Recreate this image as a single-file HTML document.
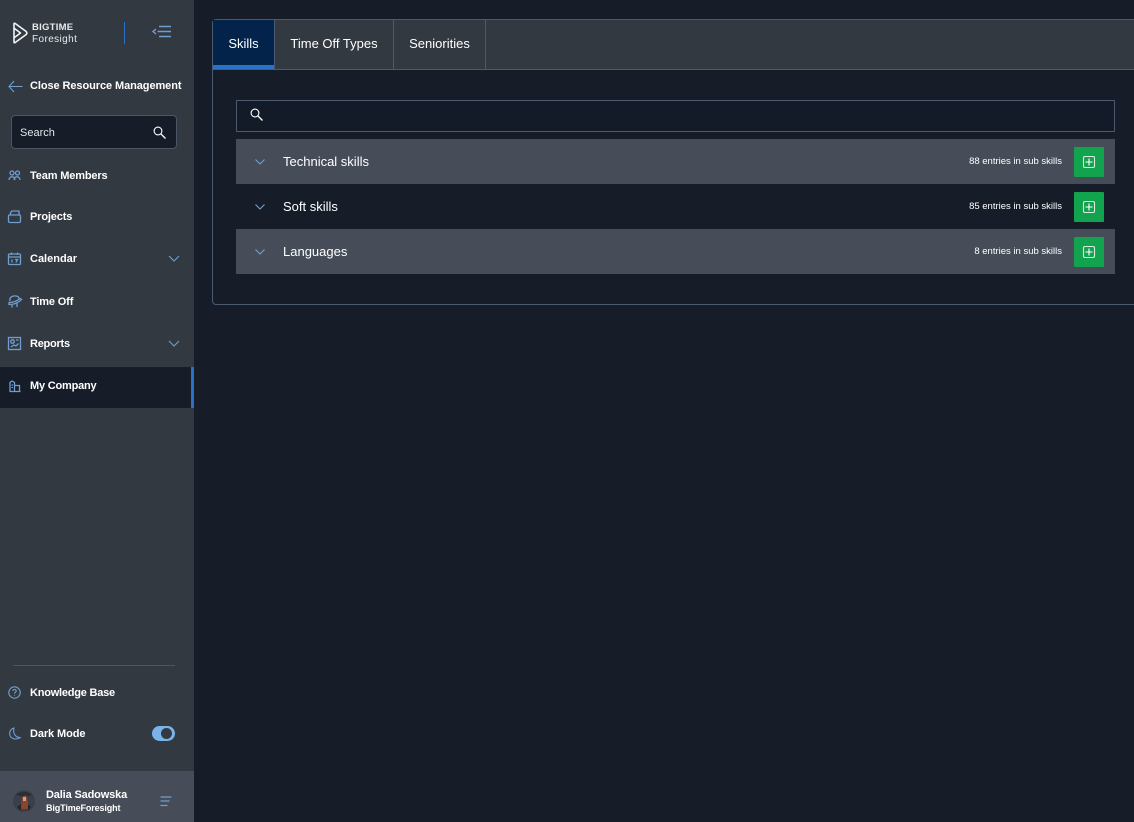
<!DOCTYPE html>
<html><head><meta charset="utf-8"><style>
*{box-sizing:border-box}
html,body{margin:0;padding:0;width:1134px;height:822px;overflow:hidden;background:#161d29;font-family:"Liberation Sans",sans-serif;color:#fff}
.a{position:absolute}
.t{position:absolute;white-space:nowrap;line-height:14px}
.nav{font-size:11px;font-weight:700;left:30px;color:#fff;letter-spacing:-.15px}
svg{position:absolute;overflow:visible;fill:none;stroke:#6f9fd0;stroke-width:1.3}
.row{position:absolute;left:236px;width:879px;height:45px}
.g{background:#464d58}
.btn{position:absolute;left:838px;top:8px;width:30px;height:30px;background:#12a34e;border-radius:1px}
.cnt{position:absolute;right:53px;top:16px;font-size:9.5px;line-height:14px;white-space:nowrap;color:#fff}
.nm{position:absolute;left:47px;top:15px;font-size:13px;line-height:16px;color:#fff;white-space:nowrap}
.tab{position:absolute;top:20px;height:49px;font-size:13px;line-height:47px;text-align:center;color:#fff}
</style></head><body>
<div class="a" style="left:0;top:0;width:194px;height:822px;background:#333940"></div>
<div class="a" style="left:0;top:367px;width:194px;height:41px;background:#161d29"></div>
<div class="a" style="left:191px;top:367px;width:3px;height:41px;background:#2a72c8"></div>
<div class="a" style="left:0;top:771px;width:194px;height:51px;background:#464d58"></div>

<svg style="left:13px;top:22px" width="15" height="22" viewBox="0 0 15 22"><path d="M1 2 Q1 .8 2.200 1.500 L13.200 9.500 Q14.500 11 13.200 12.500 L2.200 20.500 Q1 21.200 1 20 Z M1.500 6.500 L7.500 11 L1.500 15.500" stroke="#f2f4f5" stroke-width="1.600" stroke-linejoin="round"/></svg>
<div class="t" style="left:32px;top:21px;font-size:9.500px;font-weight:700;letter-spacing:.25px;color:#e8eaec">BIGTIME</div>
<div class="t" style="left:32px;top:33px;font-size:10px;color:#e8eaec;letter-spacing:.4px">Foresight</div>
<div class="a" style="left:124px;top:22px;width:1px;height:22px;background:#2a72c8"></div>
<svg style="left:152px;top:25px" width="20" height="14" viewBox="0 0 20 14"><path d="M4 4 L1 6.500 L4 9 M7 1.500 H19 M5.500 6.500 H19 M7 11.500 H19" stroke-width="1.400"/></svg>

<svg style="left:8px;top:80px" width="15" height="13" viewBox="0 0 15 13"><path d="M6 1 L1 6.500 L6 12 M1 6.500 H14.500" stroke-width="1.100"/></svg>
<div class="t nav" style="top:79px;letter-spacing:-.08px">Close Resource Management</div>

<div class="a" style="left:11px;top:115px;width:166px;height:34px;background:#161d29;border:1px solid #4a5568;border-radius:4px"></div>
<div class="t" style="left:20px;top:126px;font-size:11px;color:#e4e6e9">Search</div>
<svg style="left:153px;top:126px" width="13" height="13" viewBox="0 0 13 13"><circle cx="5" cy="5" r="3.900" stroke="#fff" stroke-width="1.100"/><path d="M8 8 L12.500 12.500" stroke="#fff" stroke-width="1.300"/></svg>

<svg style="left:8px;top:170px" width="13" height="11" viewBox="0 0 13 11"><circle cx="4" cy="3" r="2"/><circle cx="9.500" cy="3" r="2"/><path d="M1 10 C1 6.500 6 5 7 10 M6 10 C7 5 12 6.500 12 10"/></svg>
<div class="t nav" style="top:169px">Team Members</div>
<svg style="left:8px;top:210px" width="13" height="13" viewBox="0 0 13 13"><path d="M1.500 5 H11.500 Q12.500 5 12.500 6 V11 Q12.500 12.500 11 12.500 H2 Q.5 12.500 .5 11 V6 Q.5 5 1.500 5 M2.500 5 V2.500 L4 1 H11 V5"/></svg>
<div class="t nav" style="top:210px">Projects</div>
<svg style="left:8px;top:252px" width="13" height="13" viewBox="0 0 13 13"><rect x=".5" y="2" width="12" height="10.500" rx="1"/><path d="M.5 5 H12.500 M3.500 .5 V3 M9.500 .5 V3 M4 7.500 V10.500 M7 7.500 H9.500 L8 10.500"/></svg>
<div class="t nav" style="top:252px;letter-spacing:0">Calendar</div>
<svg style="left:168px;top:255px" width="12" height="7" viewBox="0 0 12 7"><path d="M1 1 L6 6 L11 1" stroke-width="1.100"/></svg>
<svg style="left:8px;top:295px" width="14" height="13" viewBox="0 0 14 13"><path d="M2 6 C1 2 5 .5 8 1 C10 1.300 11 2.500 11 3.500 M1 7.500 C4 7.500 8 7 12 3.500 L13.500 4.500 C10 8.500 6 9.500 1 9.500 Z M4 10 V12.500 M9 8.500 V12"/></svg>
<div class="t nav" style="top:295px">Time Off</div>
<svg style="left:8px;top:337px" width="13" height="13" viewBox="0 0 13 13"><rect x=".5" y=".5" width="12" height="12"/><circle cx="4.500" cy="4.500" r="1.800"/><path d="M3 10 L6 8 L8 9 L10.500 6.500 M8 3 H10.500"/></svg>
<div class="t nav" style="top:337px;letter-spacing:-.25px">Reports</div>
<svg style="left:168px;top:340px" width="12" height="7" viewBox="0 0 12 7"><path d="M1 1 L6 6 L11 1" stroke-width="1.100"/></svg>
<svg style="left:9px;top:380px" width="12" height="12" viewBox="0 0 12 12"><path d="M.5 11.500 H11.500 M1 11.500 V2.500 L3 1 L5.500 2.500 V11.500 M5.500 5.500 H10.500 V11.500 M2.500 5 H4 M2.500 7.500 H4" stroke-width="1.300"/></svg>
<div class="t nav" style="top:379px;letter-spacing:-.2px">My Company</div>

<div class="a" style="left:13px;top:665px;width:162px;height:1px;background:#4a5568"></div>
<svg style="left:8px;top:686px" width="13" height="13" viewBox="0 0 13 13"><circle cx="6.500" cy="6.500" r="5.700" stroke-width="1.100"/><path d="M4.800 5 C4.800 3 8.200 3 8.200 5 C8.200 6.300 6.500 6.300 6.500 7.800 M6.500 9.200 V10" stroke-width="1.100"/></svg>
<div class="t nav" style="top:686px;letter-spacing:-.22px">Knowledge Base</div>
<svg style="left:9px;top:727px" width="12" height="13" viewBox="0 0 12 13"><path d="M5 1 C1.500 2 0 5 1 8.500 C2 11.500 7 13.500 11 10.500 C7 10.500 3.500 7 5 1 Z" stroke-width="1.100"/></svg>
<div class="t nav" style="top:727px;letter-spacing:-.1px">Dark Mode</div>
<div class="a" style="left:152px;top:726px;width:23px;height:15px;border-radius:8px;background:#7ab3ea"></div>
<div class="a" style="left:161px;top:728px;width:11px;height:11px;border-radius:50%;background:#333940"></div>

<svg style="left:13px;top:790px;stroke:none" width="22" height="22" viewBox="0 0 22 22"><circle cx="11" cy="11" r="11" fill="#3b3f4a"/><path d="M3 5 C7 1 15 1 19 5 L15 6 H7 Z" fill="#2a2d35"/><path d="M9 7 L13 5 L15 11 L16 19 L8 19 Z" fill="#8a4530"/><path d="M10 7 H13 V11 H10 Z" fill="#c9a27e"/><path d="M4 17 L8 14 V21 Z M18 17 L15 14 V21 Z" fill="#22252c"/></svg>
<div class="t" style="left:46px;top:788px;font-size:11px;font-weight:700;letter-spacing:-.15px;color:#fff">Dalia Sadowska</div>
<div class="t" style="left:46px;top:801px;font-size:9px;font-weight:700;letter-spacing:-.12px;color:#fff">BigTimeForesight</div>
<svg style="left:160px;top:796px" width="12" height="11" viewBox="0 0 12 11"><path d="M.5 1 H11.500 M.5 5 H9.500 M.5 9.500 H7.500"/></svg>

<div class="a" style="left:212px;top:19px;width:930px;height:286px;border:1px solid #4a5a70;border-radius:4px 0 0 4px"></div>
<div class="a" style="left:213px;top:20px;width:921px;height:49px;background:#333940;border-top-left-radius:3px"></div>
<div class="a" style="left:213px;top:69px;width:921px;height:1px;background:#4a5a70"></div>
<div class="tab" style="left:213px;width:61px;background:#03234a">Skills</div>
<div class="a" style="left:213px;top:65px;width:61px;height:4px;background:#2a72c8"></div>
<div class="a" style="left:274px;top:20px;width:1px;height:49px;background:#4a5a70"></div>
<div class="tab" style="left:275px;width:118px">Time Off Types</div>
<div class="a" style="left:393px;top:20px;width:1px;height:49px;background:#4a5a70"></div>
<div class="tab" style="left:394px;width:91px">Seniorities</div>
<div class="a" style="left:485px;top:20px;width:1px;height:49px;background:#4a5a70"></div>

<div class="a" style="left:236px;top:100px;width:879px;height:32px;border:1px solid #4a5a70;border-radius:1px;background:#141b28"></div>
<svg style="left:250px;top:108px" width="13" height="13" viewBox="0 0 13 13"><circle cx="5" cy="5" r="3.900" stroke="#fff" stroke-width="1.100"/><path d="M8 8 L12.500 12.500" stroke="#fff" stroke-width="1.300"/></svg>

<div class="row g" style="top:139px">
<svg style="left:19px;top:20px" width="10" height="6" viewBox="0 0 10 6"><path d="M.5 .5 L5 5 L9.500 .5" stroke-width="1.100"/></svg>
<div class="nm">Technical skills</div><div class="cnt">88 entries in sub skills</div>
<div class="btn"><svg style="left:8.500px;top:8.500px" width="12" height="12" viewBox="0 0 12 12"><rect x=".5" y=".5" width="11" height="11" rx="1.500" stroke="#dfe8e2" stroke-width="1.100"/><path d="M6 2.500 V9.500 M2.500 6 H9.500" stroke="#fff" stroke-width="1.100"/></svg></div>
</div>
<div class="row" style="top:184px">
<svg style="left:19px;top:20px" width="10" height="6" viewBox="0 0 10 6"><path d="M.5 .5 L5 5 L9.500 .5" stroke-width="1.100"/></svg>
<div class="nm">Soft skills</div><div class="cnt">85 entries in sub skills</div>
<div class="btn"><svg style="left:8.500px;top:8.500px" width="12" height="12" viewBox="0 0 12 12"><rect x=".5" y=".5" width="11" height="11" rx="1.500" stroke="#dfe8e2" stroke-width="1.100"/><path d="M6 2.500 V9.500 M2.500 6 H9.500" stroke="#fff" stroke-width="1.100"/></svg></div>
</div>
<div class="row g" style="top:229px">
<svg style="left:19px;top:20px" width="10" height="6" viewBox="0 0 10 6"><path d="M.5 .5 L5 5 L9.500 .5" stroke-width="1.100"/></svg>
<div class="nm">Languages</div><div class="cnt">8 entries in sub skills</div>
<div class="btn"><svg style="left:8.500px;top:8.500px" width="12" height="12" viewBox="0 0 12 12"><rect x=".5" y=".5" width="11" height="11" rx="1.500" stroke="#dfe8e2" stroke-width="1.100"/><path d="M6 2.500 V9.500 M2.500 6 H9.500" stroke="#fff" stroke-width="1.100"/></svg></div>
</div>
</body></html>
